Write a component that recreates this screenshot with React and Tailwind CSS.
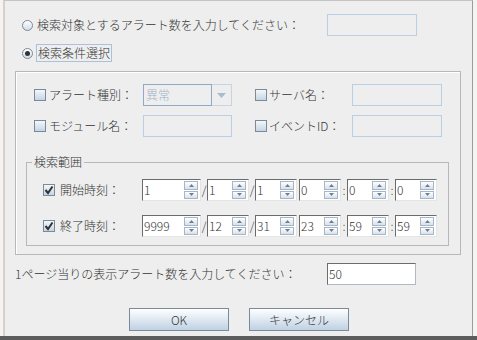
import React from 'react'

const Radio = ({ checked }) => (
  <span className="w-[11px] h-[11px] shrink-0 rounded-full border border-[#7a8a99] bg-linear-to-b from-white to-[#d3dde8] flex items-center justify-center">
    {checked && <span className="w-[5px] h-[5px] rounded-full bg-[#333333]" />}
  </span>
)

const Check = ({ checked }) => (
  <span className="w-[12px] h-[12px] shrink-0 border border-[#7a8a99] bg-linear-to-b from-[#f4f7fa] to-[#c5d5e5] flex items-center justify-center">
    {checked && (
      <svg width="10" height="10" viewBox="0 0 10 10">
        <path d="M1.5 5 L4 8 L8.5 1.5" fill="none" stroke="#333333" strokeWidth="2" />
      </svg>
    )}
  </span>
)

const Field = ({ className = '' }) => (
  <div className={'h-[22px] border border-[#b8cfe5] ' + className} />
)

const Spinner = ({ value, className }) => (
  <div className={'h-[22px] flex bg-white border border-t-[#6b6b6b] border-l-[#6b6b6b] border-r-[#e4e4e4] border-b-[#e4e4e4] ' + className}>
    <span className="flex-1 pl-[1px] leading-[20px]">{value}</span>
    <div className="w-[14px] mr-[2px] my-[1px] flex flex-col gap-[1px]">
      <div className="flex-1 border border-[#a6b6c6] bg-linear-to-b from-white to-[#d6e1ec] flex items-center justify-center">
        <svg width="5" height="3" viewBox="0 0 5 3"><path d="M0 3 L2.5 0 L5 3 Z" fill="#6f7f8f" /></svg>
      </div>
      <div className="flex-1 border border-[#a6b6c6] bg-linear-to-b from-white to-[#d6e1ec] flex items-center justify-center">
        <svg width="5" height="3" viewBox="0 0 5 3"><path d="M0 0 L2.5 3 L5 0 Z" fill="#6f7f8f" /></svg>
      </div>
    </div>
  </div>
)

const Sep = ({ children }) => <span className="w-[6px] text-center">{children}</span>

const TimeRow = ({ label, values }) => (
  <div className="h-[22px] flex items-center pl-[16px]">
    <div className="w-[99px] flex items-center">
      <Check checked />
      <span className="ml-[5px]">{label}</span>
    </div>
    <Spinner value={values[0]} className="w-[59px]" />
    <Sep>/</Sep>
    <Spinner value={values[1]} className="w-[42px]" />
    <Sep>/</Sep>
    <Spinner value={values[2]} className="w-[42px]" />
    <span className="w-[2px]" />
    <Spinner value={values[3]} className="w-[42px]" />
    <Sep>:</Sep>
    <Spinner value={values[4]} className="w-[42px]" />
    <Sep>:</Sep>
    <Spinner value={values[5]} className="w-[42px]" />
  </div>
)

const Button = ({ children }) => (
  <button className="w-[100px] h-[23px] border border-[#7a8a99] bg-linear-to-b from-white to-[#bfd1e3] text-[#333333] flex items-center justify-center">
    {children}
  </button>
)

export default function App() {
  return (
    <div className="w-[477px] h-[340px] bg-[#f4f4f2] text-[12px] leading-[16px] font-light text-[#333333] font-['Noto_Sans_CJK_JP','Noto_Sans',sans-serif]">
      <div className="ml-[3px] w-[470px] h-[336px] border-l-2 border-l-[#d6d2ca] border-t border-t-[#c4c4c4] border-r border-r-[#9c9c9c] bg-[#eeeeee]">
        <div className="mt-[13px] h-[22px] flex items-center pl-[17px]">
          <Radio />
          <span className="ml-[4px] w-[290px]">検索対象とするアラート数を入力してください：</span>
          <Field className="w-[90px]" />
        </div>

        <div className="mt-[8px] h-[18px] flex items-center pl-[17px]">
          <Radio checked />
          <span className="ml-[3px] px-[1px] h-[18px] leading-[16px] border border-[#a9c1db]">検索条件選択</span>
        </div>

        <div className="mt-[9px] ml-[10px] w-[446px] h-[184px] border border-[#b8b8b8] shadow-[inset_1px_1px_0_white] pt-[12px]">
          <div className="h-[22px] flex items-center pl-[18px]">
            <div className="w-[109px] flex items-center">
              <Check />
              <span className="ml-[3px]">アラート種別：</span>
            </div>
            <div className="w-[89px] h-[22px] flex">
              <div className="flex-1 border border-[#8eaac6] pl-[2px] leading-[20px] text-[#9fb3c8]">異常</div>
              <div className="w-[20px] border border-l-0 border-[#c6d5e4] flex items-center justify-center">
                <svg width="9" height="5" viewBox="0 0 9 5"><path d="M0 0 L9 0 L4.5 5 Z" fill="#a9bccf" /></svg>
              </div>
            </div>
            <span className="w-[23px]" />
            <div className="w-[97px] flex items-center">
              <Check />
              <span className="ml-[2px]">サーバ名：</span>
            </div>
            <Field className="w-[90px]" />
          </div>

          <div className="mt-[9px] h-[22px] flex items-center pl-[18px]">
            <div className="w-[109px] flex items-center">
              <Check />
              <span className="ml-[3px]">モジュール名：</span>
            </div>
            <Field className="w-[89px]" />
            <span className="w-[23px]" />
            <div className="w-[97px] flex items-center">
              <Check />
              <span className="ml-[2px]">イベントID：</span>
            </div>
            <Field className="w-[90px]" />
          </div>

          <fieldset className="mt-[18px] ml-[10px] w-[423px] border border-[#b8b8b8] pb-[8px]">
            <legend className="ml-[5px] px-[2px] leading-[14px]">検索範囲</legend>
            <div className="mt-[10px]">
              <TimeRow label="開始時刻：" values={['1', '1', '1', '0', '0', '0']} />
            </div>
            <div className="mt-[14px]">
              <TimeRow label="終了時刻：" values={['9999', '12', '31', '23', '59', '59']} />
            </div>
          </fieldset>
        </div>

        <div className="mt-[8px] h-[22px] flex items-center pl-[10px]">
          <span className="w-[312px]">1ページ当りの表示アラート数を入力してください：</span>
          <div className="w-[89px] h-[22px] bg-white border border-[#b0b8c0] border-t-[#6d6d6d] border-l-[#6d6d6d] pl-[1px] leading-[20px]">50</div>
        </div>

        <div className="mt-[23px] ml-[124px] flex gap-[20px]">
          <Button>OK</Button>
          <Button>キャンセル</Button>
        </div>
      </div>
      <div className="h-[4px] bg-[#5c5c5c]" />
    </div>
  )
}
